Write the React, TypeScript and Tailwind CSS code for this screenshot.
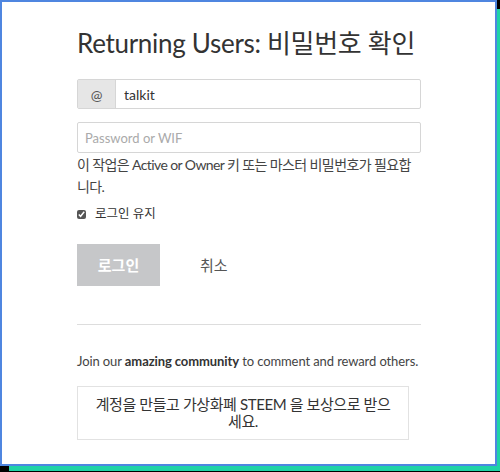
import React from "react";

export default function App() {
  const font = { fontFamily: '"Lato", "Noto Sans CJK KR", sans-serif' };
  return (
    <div className="w-[500px] h-[472px] bg-black overflow-hidden" style={font}>
      <div className="w-[497px] h-[466px] bg-white border-2 border-[#4f86e0] shadow-[7px_7px_0_-2px_#1fd3a6]">
        <div className="ml-[75px] w-[344px] pt-[24px] text-[#333]">
          <h1 className="text-[26px] leading-[34px] font-normal text-[#333] tracking-[-0.3px]">
            Returning Users: 비밀번호 확인
          </h1>

          <div className="mt-[19px] flex h-[30px] border border-[#d6d6d6] rounded-[2px]">
            <span className="w-[38px] flex items-center justify-center bg-[#e6e6e6] border-r border-[#d6d6d6] text-[14px] text-[#555]">
              @
            </span>
            <input
              defaultValue="talkit"
              className="flex-1 px-[8px] text-[14px] text-[#333] outline-none"
              style={font}
            />
          </div>

          <input
            placeholder="Password or WIF"
            className="mt-[13px] w-full h-[31px] border border-[#d6d6d6] rounded-[2px] px-[7px] text-[13px] placeholder-[#aaa] outline-none"
            style={font}
          />
          <p className="text-[14px] leading-[22px] text-[#444] mt-[1px] tracking-[-0.6px]">
            이 작업은 Active or Owner 키 또는 마스터 비밀번호가 필요합니다.
          </p>

          <label className="mt-[7px] flex items-center gap-[9px] text-[12.5px] text-[#333]">
            <input type="checkbox" defaultChecked className="w-[9px] h-[9px] accent-[#555]" />
            로그인 유지
          </label>

          <div className="mt-[20px] flex items-center">
            <button className="w-[83px] h-[42px] bg-[#c6c7c9] text-white text-[15px] font-bold">
              로그인
            </button>
            <span className="ml-[40px] text-[15px] text-[#555]">취소</span>
          </div>

          <hr className="mt-[38px] border-0 border-t border-[#ddd]" />

          <p className="mt-[27px] text-[13px] text-[#444] tracking-[-0.1px] whitespace-nowrap">
            Join our <b className="font-bold text-[#333]">amazing community</b> to comment and reward others.
          </p>

          <div className="mt-[15px] w-[332px] h-[54px] border border-[#e2e2e2] flex items-center justify-center px-[8px] text-center text-[15px] leading-[17px] text-[#333] tracking-[-0.4px]">
            <span>
              <span className="whitespace-nowrap">계정을 만들고 가상화폐 STEEM 을 보상으로 받으</span>
              <br />
              세요.
            </span>
          </div>
        </div>
      </div>
    </div>
  );
}
